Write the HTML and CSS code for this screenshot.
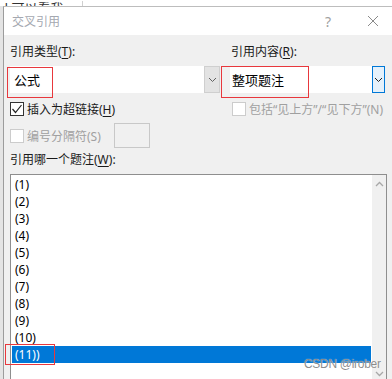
FILE: index.html
```html
<!DOCTYPE html>
<html lang="zh-CN">
<head>
    <meta charset="UTF-8" />
    <title>交叉引用</title>
    <link rel="stylesheet" href="styles.css">
</head>
<body>
    <div class="topstrip"><span class="doc-text">d 可以看我</span></div>
    <div class="dialog">
        <div class="titlebar">
            <span class="title">交叉引用</span>
            <span class="help">?</span>
            <span class="close">
                <svg width="12" height="12" viewBox="0 0 12 12"><path d="M1 1 L11 11 M11 1 L1 11" stroke="#8a8a8a" stroke-width="1" fill="none"/></svg>
            </span>
        </div>
        <div class="content">
            <div class="row">
                <div class="col col-left">
                    <div class="label">引用类型(<u>T</u>):</div>
                    <div class="combo">
                        <span class="combo-value">公式</span>
                        <span class="combo-btn">
                            <svg width="9" height="6" viewBox="0 0 9 6"><polyline points="1,1 4.5,4.5 8,1" stroke="#606060" fill="none"/></svg>
                        </span>
                        <span class="mark mark-type"></span>
                    </div>
                </div>
                <div class="col col-right">
                    <div class="label">引用内容(<u>R</u>):</div>
                    <div class="combo combo-focus">
                        <span class="combo-value">整项题注</span>
                        <span class="combo-btn">
                            <svg width="9" height="6" viewBox="0 0 9 6"><polyline points="1,1 4.5,4.5 8,1" stroke="#202020" fill="none"/></svg>
                        </span>
                        <span class="mark mark-content"></span>
                    </div>
                </div>
            </div>

            <div class="row check-row">
                <div class="col col-left check">
                    <span class="box checked">
                        <svg width="12" height="12" viewBox="0 0 12 12"><polyline points="1.5,6 4.5,9.5 10.5,2" stroke="#222" stroke-width="1.2" fill="none"/></svg>
                    </span>
                    <span>插入为超链接(<u>H</u>)</span>
                </div>
                <div class="col col-right check disabled">
                    <span class="box"></span>
                    <span>包括“见上方”/“见下方”(N)</span>
                </div>
            </div>

            <div class="row sep-row">
                <div class="check disabled">
                    <span class="box"></span>
                    <span class="sep-label">编号分隔符(S)</span>
                </div>
                <span class="sep-input"></span>
            </div>

            <div class="label list-label">引用哪一个题注(<u>W</u>):</div>

            <div class="listbox">
                <div class="items">
                    <div class="item">(1)</div>
                    <div class="item">(2)</div>
                    <div class="item">(3)</div>
                    <div class="item">(4)</div>
                    <div class="item">(5)</div>
                    <div class="item">(6)</div>
                    <div class="item">(7)</div>
                    <div class="item">(8)</div>
                    <div class="item">(9)</div>
                    <div class="item">(10)</div>
                    <div class="item selected">(11))<span class="mark mark-item"></span></div>
                </div>
                <div class="scrollbar">
                    <span class="arrow">
                        <svg width="9" height="6" viewBox="0 0 9 6"><polyline points="1,5 4.5,1.5 8,5" stroke="#a8a8a8" stroke-width="1.3" fill="none"/></svg>
                    </span>
                    <span class="arrow">
                        <svg width="9" height="6" viewBox="0 0 9 6"><polyline points="1,1 4.5,4.5 8,1" stroke="#a8a8a8" stroke-width="1.3" fill="none"/></svg>
                    </span>
                </div>
                <span class="watermark">CSDN @irober</span>
            </div>
        </div>
    </div>
</body>
</html>
```

FILE: styles.css
```css
body {
    margin: 0;
    width: 392px;
    height: 379px;
    overflow: hidden;
    background-color: #e4e4e4;
    font-family: "Noto Sans", "Noto Sans CJK SC", sans-serif;
    font-size: 12px;
    color: #1a1a1a;
}

u {
    text-underline-offset: 2px;
}

.topstrip {
    height: 6px;
    background-color: #fff;
    overflow: hidden;
}

.doc-text {
    display: inline-block;
    width: 82px;
    margin-top: -8px;
    line-height: 14px;
    font-size: 13px;
    color: #333;
    border-right: 1px solid #d0d0d0;
}

.dialog {
    margin-left: 3px;
    width: 388px;
    border-left: 1px solid #9c9c9c;
    border-top: 1px solid #bdbdbd;
}

.titlebar {
    height: 28px;
    background-color: #fff;
    display: flex;
    align-items: center;
    padding: 0 9px 0 8px;
}

.title {
    color: #a4a8b0;
}

.help {
    margin-left: auto;
    width: 20px;
    text-align: center;
    color: #a0a0a0;
    font-size: 14px;
}

.close {
    margin-left: 25px;
    width: 20px;
    display: flex;
    justify-content: center;
}

.content {
    background-color: #f0f0f0;
    padding: 9px 0 0 6px;
    height: 344px;
    box-sizing: border-box;
    overflow: hidden;
}

.row {
    display: flex;
    gap: 10px;
}

.col-left {
    width: 210px;
}

.col-right {
    width: 155px;
}

.label {
    line-height: 16px;
}

.col-right .label {
    padding-left: 1px;
}

.combo {
    position: relative;
    margin-top: 6px;
    height: 27px;
    background-color: #fff;
    display: flex;
    align-items: center;
    box-sizing: border-box;
}

.combo-value {
    flex: 1;
    padding-left: 4px;
    font-size: 13px;
    color: #000;
}

.combo-focus .combo-value {
    padding-left: 2px;
}

.combo-btn {
    width: 16px;
    height: 100%;
    box-sizing: border-box;
    background-color: #e3e3e3;
    border: 1px solid #cfcfcf;
    display: flex;
    align-items: center;
    justify-content: center;
}

.combo-focus .combo-btn {
    width: 13px;
    background-color: #e5f1fb;
    border: 1px solid #0078d7;
}

.mark {
    position: absolute;
    border: 1px solid #e8383d;
    box-sizing: border-box;
}

.mark-type {
    left: -3px;
    top: 1px;
    width: 46px;
    height: 31px;
}

.mark-content {
    left: -9px;
    top: 0;
    width: 88px;
    height: 32px;
}

.check-row {
    margin-top: 8px;
    height: 16px;
    align-items: center;
}

.check {
    display: flex;
    align-items: center;
    gap: 3px;
}

.col-right.check {
    padding-left: 2px;
}

.box {
    width: 14px;
    height: 14px;
    box-sizing: border-box;
    border: 1px solid #cccccc;
    background-color: #fff;
    display: flex;
    align-items: center;
    justify-content: center;
}

.box.checked {
    border-color: #333;
}

.disabled {
    color: #a0a0a0;
}

.sep-row {
    margin-top: 6px;
    height: 25px;
    align-items: center;
    gap: 0;
}

.sep-label {
    width: 87px;
}

.sep-input {
    width: 36px;
    height: 25px;
    box-sizing: border-box;
    border: 1px solid #c8c8c8;
    background-color: #f0f0f0;
}

.list-label {
    margin-top: 4px;
}

.listbox {
    position: relative;
    margin-top: 6px;
    width: 377px;
    height: 209px;
    box-sizing: border-box;
    border: 1px solid #8e8e8e;
    background-color: #fff;
    display: flex;
}

.items {
    flex: 1;
    padding: 1px;
}

.item {
    position: relative;
    height: 17px;
    line-height: 17px;
    padding-left: 3px;
    color: #000;
}

.item.selected {
    background-color: #0078d7;
    color: #fff;
}

.mark-item {
    left: -7px;
    top: -2px;
    width: 50px;
    height: 21px;
}

.scrollbar {
    width: 14px;
    background-color: #f0f0f0;
    display: flex;
    flex-direction: column;
    justify-content: space-between;
}

.arrow {
    height: 17px;
    display: flex;
    align-items: center;
    justify-content: center;
}

.watermark {
    position: absolute;
    left: 293px;
    top: 182px;
    line-height: 14px;
    font-family: "Liberation Sans", sans-serif;
    font-size: 12px;
    letter-spacing: -0.3px;
    color: rgba(120, 120, 120, 0.85);
    text-shadow: 0 0 1px #fff;
}
```
